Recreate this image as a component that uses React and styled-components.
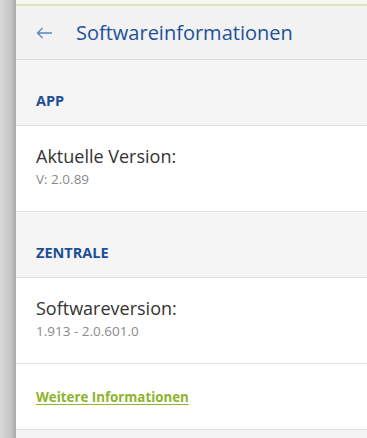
import React from "react";
import styled, { createGlobalStyle } from "styled-components";

const GlobalStyle = createGlobalStyle`
  html, body {
    margin: 0;
    padding: 0;
    background: #f4f4f4;
    font-family: "Open Sans", "Noto Sans", sans-serif;
  }
  * {
    box-sizing: border-box;
  }
`;

const sections = [
  {
    title: "APP",
    label: "Aktuelle Version:",
    value: "V: 2.0.89",
  },
  {
    title: "ZENTRALE",
    label: "Softwareversion:",
    value: "1.913 - 2.0.601.0",
  },
];

export default function App() {
  return (
    <Page>
      <GlobalStyle />
      <Shade />
      <Main>
        <TopStrip />
        <Header>
          <BackButton aria-label="Zurück">
            <svg width="17" height="12" viewBox="0 0 17 12" fill="none">
              <path
                d="M16 6H1.5M6.5 1L1.5 6L6.5 11"
                stroke="#5b86c2"
                strokeWidth="1.3"
              />
            </svg>
          </BackButton>
          <Title>Softwareinformationen</Title>
        </Header>
        {sections.map((s) => (
          <React.Fragment key={s.title}>
            <SectionHead>
              <SectionTitle>{s.title}</SectionTitle>
            </SectionHead>
            <Row>
              <Label>{s.label}</Label>
              <Value>{s.value}</Value>
            </Row>
          </React.Fragment>
        ))}
        <LinkRow>
          <MoreLink href="#">Weitere Informationen</MoreLink>
        </LinkRow>
      </Main>
    </Page>
  );
}

const Page = styled.div`
  display: flex;
  min-height: 438px;
`;

const Shade = styled.div`
  width: 16px;
  flex-shrink: 0;
  background: linear-gradient(to right, #d9d9d9 0%, #c4c4c4 70%, #a9a9a9 100%);
`;

const Main = styled.div`
  flex: 1;
  display: flex;
  flex-direction: column;
  background: #f4f4f4;
`;

const TopStrip = styled.div`
  height: 6px;
  border-bottom: 2px solid #dfe5bd;
  background: #f6f6f3;
`;

const Header = styled.div`
  height: 54px;
  display: flex;
  align-items: center;
  padding-left: 20px;
  background: #f2f2f2;
  border-bottom: 1px solid #dedede;
`;

const BackButton = styled.button`
  border: 0;
  background: none;
  padding: 0;
  width: 17px;
  height: 12px;
  display: flex;
  margin-right: 23px;
  margin-top: 1px;
  cursor: pointer;
`;

const Title = styled.h1`
  margin: 0;
  font-size: 20px;
  font-weight: 400;
  color: #22519a;
`;

const SectionHead = styled.div`
  height: 66px;
  display: flex;
  align-items: flex-end;
  padding: 0 0 15px 20px;
  background: #f5f5f5;
  border-bottom: 1px solid #e2e2e2;
`;

const SectionTitle = styled.h2`
  margin: 0;
  font-size: 14.5px;
  font-weight: 700;
  color: #1d4f97;
`;

const Row = styled.div`
  height: 86px;
  display: flex;
  flex-direction: column;
  justify-content: center;
  padding: 0 0 4px 20px;
  background: #ffffff;
  border-bottom: 1px solid #e2e2e2;
`;

const Label = styled.div`
  font-size: 18px;
  line-height: 24px;
  color: #333333;
`;

const Value = styled.div`
  margin-top: 2px;
  font-size: 13.5px;
  line-height: 19px;
  color: #8a8a8a;
`;

const LinkRow = styled.div`
  height: 66px;
  display: flex;
  align-items: center;
  padding: 0 0 0 20px;
  background: #ffffff;
  border-bottom: 1px solid #e2e2e2;
`;

const MoreLink = styled.a`
  font-size: 13.3px;
  font-weight: 700;
  color: #8db52b;
  text-decoration: underline;
  text-underline-offset: 2px;
`;
